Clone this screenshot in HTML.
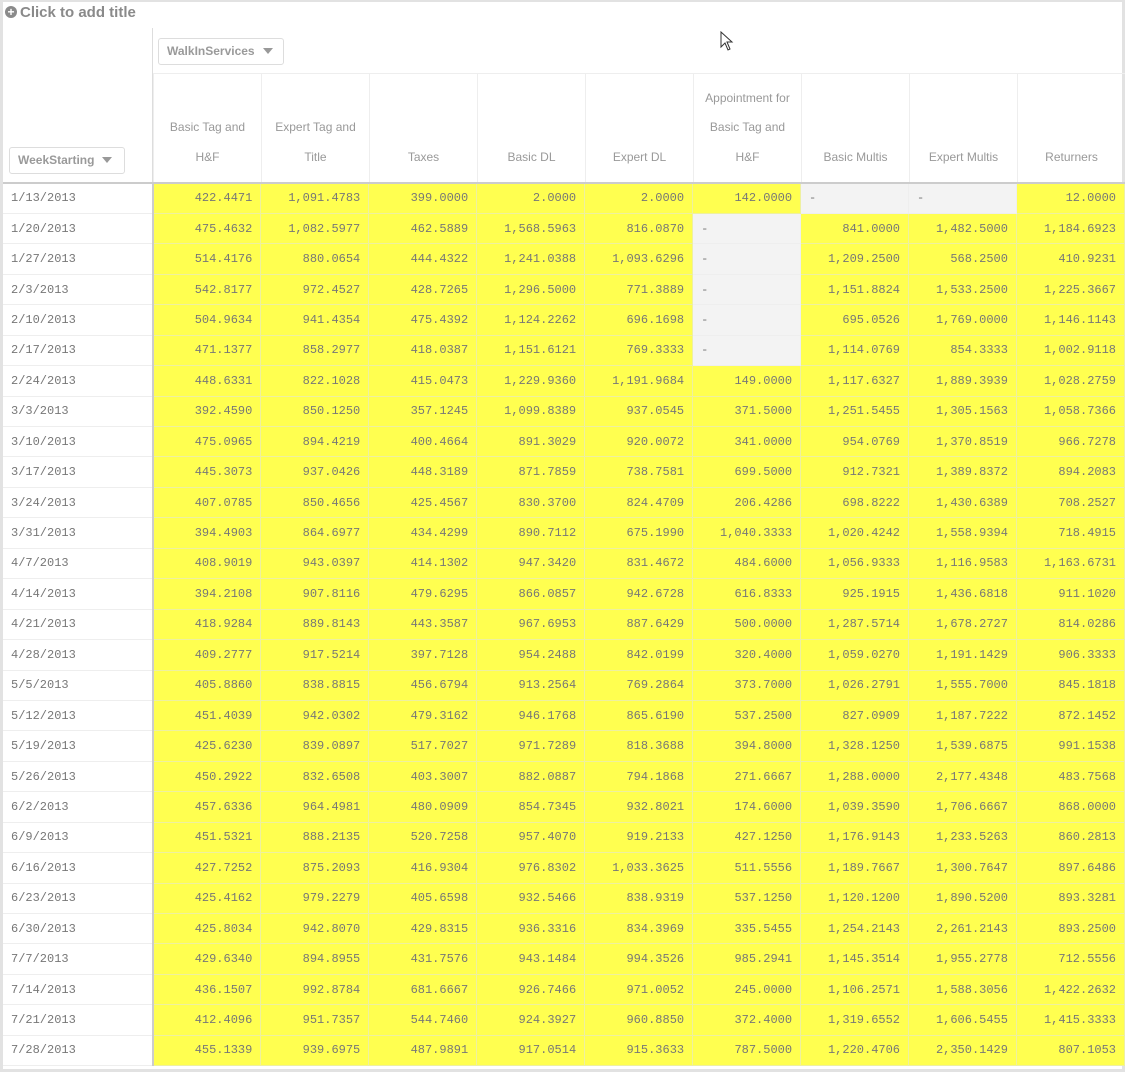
<!DOCTYPE html>
<html><head><meta charset="utf-8"><style>
body{margin:0;width:1125px;height:1080px;background:#fff;overflow:hidden;position:relative;font-family:"Liberation Sans",sans-serif}
.frame{position:absolute;left:0;top:0;width:1125px;height:1072px;border:3px solid #e2e2e2;border-top:2px solid #e2e2e2;box-sizing:border-box}
.title{position:absolute;left:5px;top:4px;font-size:15px;font-weight:bold;color:#8a8a8a}
.title span{display:inline-block;width:12px;height:12px;border-radius:50%;background:#8a8a8a;color:#fff;font-size:12px;line-height:12px;text-align:center;vertical-align:1px;margin-right:3px}
.dd{position:absolute;border:1px solid #ddd;border-radius:3px;font-size:12px;font-weight:bold;color:#9a9a9a;box-sizing:border-box;padding:0 8px;line-height:25px}
.dd:after{content:"";display:inline-block;margin-left:8px;border-left:5px solid transparent;border-right:5px solid transparent;border-top:6px solid #999;vertical-align:1px}
.vl{position:absolute;background:#ccc}
.hdr{position:absolute;top:73px;height:109px;width:108px;border-left:1px solid #eee;box-sizing:border-box;font-size:12px;color:#999;text-align:center;line-height:29.5px;display:flex;flex-direction:column;justify-content:flex-end;padding-bottom:10px}
table{position:absolute;left:3px;top:182px;border-collapse:collapse;table-layout:fixed;font-family:"Liberation Mono",monospace;font-size:12px;color:#777;border-top:2px solid #ccc}
td{height:30.45px;padding:0 8px;box-sizing:border-box;text-align:right;background:#ffff50;border:1px solid #eef0a0;border-top:1px solid #f8f8c0;white-space:nowrap;overflow:hidden}
td:first-child{text-align:left;background:#fff;border:none;border-bottom:1px solid #eee;border-right:2px solid #ccc;width:150px}
td.g{background:#f3f3f3;text-align:left;border-color:#eee}
col.d{width:108px}
</style></head><body>
<div class="frame"></div>
<div class="title"><span>+</span>Click to add title</div>
<div class="vl" style="left:152px;top:28px;width:1px;height:154px;background:#ddd"></div>
<div class="vl" style="left:153px;top:73px;width:972px;height:1px;background:#eee"></div>
<div class="dd" style="left:158px;top:38px;width:126px;height:27px">WalkInServices</div>
<div class="dd" style="left:9px;top:147px;width:116px;height:27px">WeekStarting</div>
<div class="hdr" style="left:153px">Basic Tag and<br>H&amp;F</div>
<div class="hdr" style="left:261px">Expert Tag and<br>Title</div>
<div class="hdr" style="left:369px">Taxes</div>
<div class="hdr" style="left:477px">Basic DL</div>
<div class="hdr" style="left:585px">Expert DL</div>
<div class="hdr" style="left:693px">Appointment for<br>Basic Tag and<br>H&amp;F</div>
<div class="hdr" style="left:801px">Basic Multis</div>
<div class="hdr" style="left:909px">Expert Multis</div>
<div class="hdr" style="left:1017px">Returners</div>
<svg style="position:absolute;left:720px;top:31px" width="14" height="20" viewBox="0 0 14 20"><path d="M1 1 L1 16 L5 12 L8 19 L10 18 L7 11 L12 11 Z" fill="#fff" stroke="#333" stroke-width="1"/></svg>
<table>
<colgroup><col style="width:150px"><col class="d"><col class="d"><col class="d"><col class="d"><col class="d"><col class="d"><col class="d"><col class="d"><col class="d"></colgroup>
<tr><td>1/13/2013</td><td>422.4471</td><td>1,091.4783</td><td>399.0000</td><td>2.0000</td><td>2.0000</td><td>142.0000</td><td class="g">-</td><td class="g">-</td><td>12.0000</td></tr>
<tr><td>1/20/2013</td><td>475.4632</td><td>1,082.5977</td><td>462.5889</td><td>1,568.5963</td><td>816.0870</td><td class="g">-</td><td>841.0000</td><td>1,482.5000</td><td>1,184.6923</td></tr>
<tr><td>1/27/2013</td><td>514.4176</td><td>880.0654</td><td>444.4322</td><td>1,241.0388</td><td>1,093.6296</td><td class="g">-</td><td>1,209.2500</td><td>568.2500</td><td>410.9231</td></tr>
<tr><td>2/3/2013</td><td>542.8177</td><td>972.4527</td><td>428.7265</td><td>1,296.5000</td><td>771.3889</td><td class="g">-</td><td>1,151.8824</td><td>1,533.2500</td><td>1,225.3667</td></tr>
<tr><td>2/10/2013</td><td>504.9634</td><td>941.4354</td><td>475.4392</td><td>1,124.2262</td><td>696.1698</td><td class="g">-</td><td>695.0526</td><td>1,769.0000</td><td>1,146.1143</td></tr>
<tr><td>2/17/2013</td><td>471.1377</td><td>858.2977</td><td>418.0387</td><td>1,151.6121</td><td>769.3333</td><td class="g">-</td><td>1,114.0769</td><td>854.3333</td><td>1,002.9118</td></tr>
<tr><td>2/24/2013</td><td>448.6331</td><td>822.1028</td><td>415.0473</td><td>1,229.9360</td><td>1,191.9684</td><td>149.0000</td><td>1,117.6327</td><td>1,889.3939</td><td>1,028.2759</td></tr>
<tr><td>3/3/2013</td><td>392.4590</td><td>850.1250</td><td>357.1245</td><td>1,099.8389</td><td>937.0545</td><td>371.5000</td><td>1,251.5455</td><td>1,305.1563</td><td>1,058.7366</td></tr>
<tr><td>3/10/2013</td><td>475.0965</td><td>894.4219</td><td>400.4664</td><td>891.3029</td><td>920.0072</td><td>341.0000</td><td>954.0769</td><td>1,370.8519</td><td>966.7278</td></tr>
<tr><td>3/17/2013</td><td>445.3073</td><td>937.0426</td><td>448.3189</td><td>871.7859</td><td>738.7581</td><td>699.5000</td><td>912.7321</td><td>1,389.8372</td><td>894.2083</td></tr>
<tr><td>3/24/2013</td><td>407.0785</td><td>850.4656</td><td>425.4567</td><td>830.3700</td><td>824.4709</td><td>206.4286</td><td>698.8222</td><td>1,430.6389</td><td>708.2527</td></tr>
<tr><td>3/31/2013</td><td>394.4903</td><td>864.6977</td><td>434.4299</td><td>890.7112</td><td>675.1990</td><td>1,040.3333</td><td>1,020.4242</td><td>1,558.9394</td><td>718.4915</td></tr>
<tr><td>4/7/2013</td><td>408.9019</td><td>943.0397</td><td>414.1302</td><td>947.3420</td><td>831.4672</td><td>484.6000</td><td>1,056.9333</td><td>1,116.9583</td><td>1,163.6731</td></tr>
<tr><td>4/14/2013</td><td>394.2108</td><td>907.8116</td><td>479.6295</td><td>866.0857</td><td>942.6728</td><td>616.8333</td><td>925.1915</td><td>1,436.6818</td><td>911.1020</td></tr>
<tr><td>4/21/2013</td><td>418.9284</td><td>889.8143</td><td>443.3587</td><td>967.6953</td><td>887.6429</td><td>500.0000</td><td>1,287.5714</td><td>1,678.2727</td><td>814.0286</td></tr>
<tr><td>4/28/2013</td><td>409.2777</td><td>917.5214</td><td>397.7128</td><td>954.2488</td><td>842.0199</td><td>320.4000</td><td>1,059.0270</td><td>1,191.1429</td><td>906.3333</td></tr>
<tr><td>5/5/2013</td><td>405.8860</td><td>838.8815</td><td>456.6794</td><td>913.2564</td><td>769.2864</td><td>373.7000</td><td>1,026.2791</td><td>1,555.7000</td><td>845.1818</td></tr>
<tr><td>5/12/2013</td><td>451.4039</td><td>942.0302</td><td>479.3162</td><td>946.1768</td><td>865.6190</td><td>537.2500</td><td>827.0909</td><td>1,187.7222</td><td>872.1452</td></tr>
<tr><td>5/19/2013</td><td>425.6230</td><td>839.0897</td><td>517.7027</td><td>971.7289</td><td>818.3688</td><td>394.8000</td><td>1,328.1250</td><td>1,539.6875</td><td>991.1538</td></tr>
<tr><td>5/26/2013</td><td>450.2922</td><td>832.6508</td><td>403.3007</td><td>882.0887</td><td>794.1868</td><td>271.6667</td><td>1,288.0000</td><td>2,177.4348</td><td>483.7568</td></tr>
<tr><td>6/2/2013</td><td>457.6336</td><td>964.4981</td><td>480.0909</td><td>854.7345</td><td>932.8021</td><td>174.6000</td><td>1,039.3590</td><td>1,706.6667</td><td>868.0000</td></tr>
<tr><td>6/9/2013</td><td>451.5321</td><td>888.2135</td><td>520.7258</td><td>957.4070</td><td>919.2133</td><td>427.1250</td><td>1,176.9143</td><td>1,233.5263</td><td>860.2813</td></tr>
<tr><td>6/16/2013</td><td>427.7252</td><td>875.2093</td><td>416.9304</td><td>976.8302</td><td>1,033.3625</td><td>511.5556</td><td>1,189.7667</td><td>1,300.7647</td><td>897.6486</td></tr>
<tr><td>6/23/2013</td><td>425.4162</td><td>979.2279</td><td>405.6598</td><td>932.5466</td><td>838.9319</td><td>537.1250</td><td>1,120.1200</td><td>1,890.5200</td><td>893.3281</td></tr>
<tr><td>6/30/2013</td><td>425.8034</td><td>942.8070</td><td>429.8315</td><td>936.3316</td><td>834.3969</td><td>335.5455</td><td>1,254.2143</td><td>2,261.2143</td><td>893.2500</td></tr>
<tr><td>7/7/2013</td><td>429.6340</td><td>894.8955</td><td>431.7576</td><td>943.1484</td><td>994.3526</td><td>985.2941</td><td>1,145.3514</td><td>1,955.2778</td><td>712.5556</td></tr>
<tr><td>7/14/2013</td><td>436.1507</td><td>992.8784</td><td>681.6667</td><td>926.7466</td><td>971.0052</td><td>245.0000</td><td>1,106.2571</td><td>1,588.3056</td><td>1,422.2632</td></tr>
<tr><td>7/21/2013</td><td>412.4096</td><td>951.7357</td><td>544.7460</td><td>924.3927</td><td>960.8850</td><td>372.4000</td><td>1,319.6552</td><td>1,606.5455</td><td>1,415.3333</td></tr>
<tr><td>7/28/2013</td><td>455.1339</td><td>939.6975</td><td>487.9891</td><td>917.0514</td><td>915.3633</td><td>787.5000</td><td>1,220.4706</td><td>2,350.1429</td><td>807.1053</td></tr>
</table>
</body></html>
